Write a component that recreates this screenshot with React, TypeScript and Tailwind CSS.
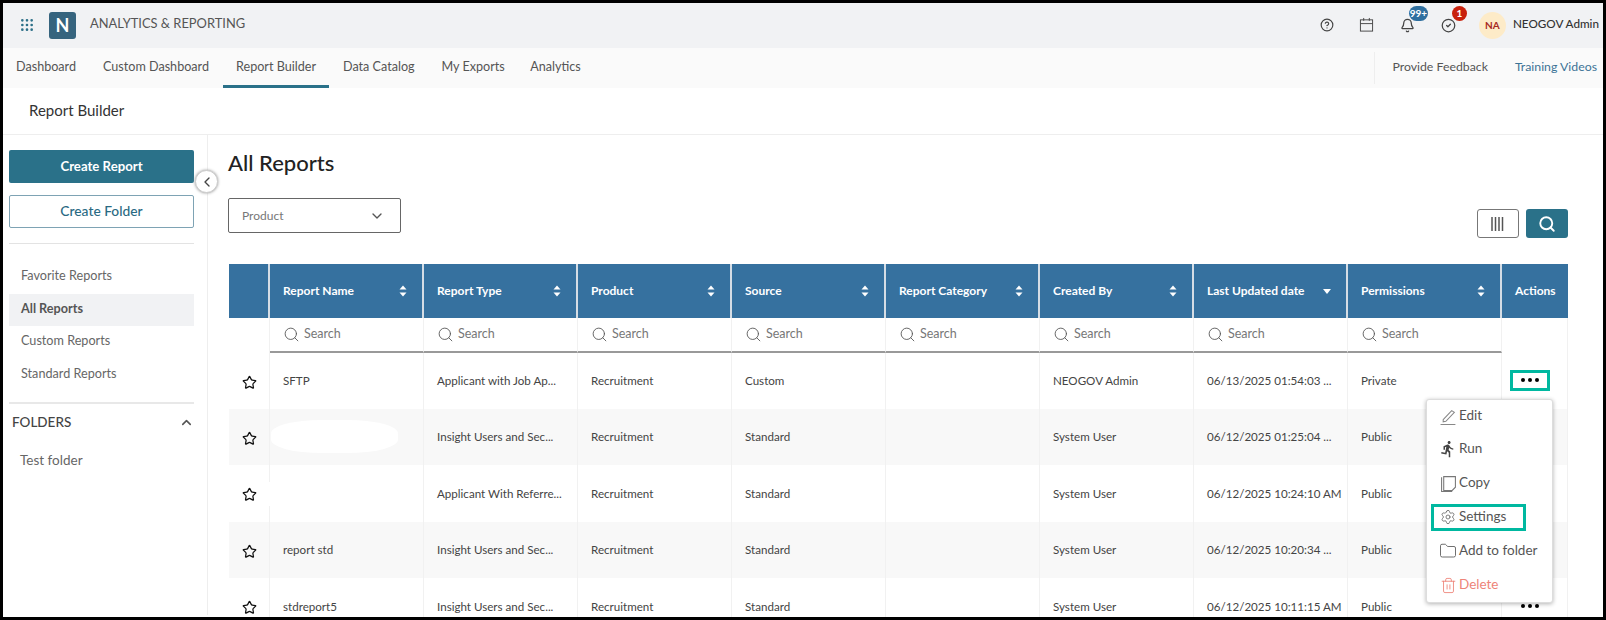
import { ChevronDown, ChevronLeft, ChevronUp, CircleHelp, Search, Star, Bell, CircleCheck, Trash2, Folder, Settings, Grip } from "lucide-react";
import { MdDirectionsRun } from "react-icons/md";

const columns = ["Report Name", "Report Type", "Product", "Source", "Report Category", "Created By", "Last Updated date", "Permissions"];

const rows = [
  { name: "SFTP", type: "Applicant with Job Ap...", source: "Custom", by: "NEOGOV Admin", date: "06/13/2025 01:54:03 ...", perm: "Private" },
  { name: "", type: "Insight Users and Sec...", source: "Standard", by: "System User", date: "06/12/2025 01:25:04 ...", perm: "Public", blob: true },
  { name: "", type: "Applicant With Referre...", source: "Standard", by: "System User", date: "06/12/2025 10:24:10 AM", perm: "Public", patch: true },
  { name: "report std", type: "Insight Users and Sec...", source: "Standard", by: "System User", date: "06/12/2025 10:20:34 ...", perm: "Public" },
  { name: "stdreport5", type: "Insight Users and Sec...", source: "Standard", by: "System User", date: "06/12/2025 10:11:15 AM", perm: "Public" },
];

function SortIcon() {
  return (
    <svg width="8" height="12" viewBox="0 0 8 12" className="fill-white">
      <path d="M4 0.5 7.5 4.5H.5zM4 11.5.5 7.5h7z" />
    </svg>
  );
}

function Dots() {
  return (
    <span className="flex gap-[3px]">
      <i className="h-[4px] w-[4px] rounded-full bg-black" />
      <i className="h-[4px] w-[4px] rounded-full bg-black" />
      <i className="h-[4px] w-[4px] rounded-full bg-black" />
    </span>
  );
}

function MenuItem({ icon, label, danger, first }: { icon: React.ReactNode; label: string; danger?: boolean; first?: boolean }) {
  return (
    <div className={`flex items-center gap-[2px] pl-[12px] text-[13.5px] ${first ? "h-[32px]" : "h-[34px]"} ${danger ? "text-[#ee8478]" : "text-[#555]"}`}>
      <span className="flex w-[18px] justify-center">{icon}</span>
      <span className="pb-[2px]">{label}</span>
    </div>
  );
}

export default function App() {
  return (
    <div className="h-[620px] w-[1606px] overflow-hidden border-x-[3px] border-y-[3px] border-black bg-white font-['Lato',sans-serif] text-[13px] text-[#444]">
      <header className="flex h-[45px] items-center bg-[#f1f2f4] pb-[1px] pl-[16px] pr-[4px]">
        <Grip size={16} className="text-[#2d7088]" />
        <div className="ml-[14px] flex h-[27px] w-[27px] items-center justify-center rounded-[3px] bg-[#36647e] text-[18px] font-bold text-white">N</div>
        <span className="ml-[14px] pb-[2px] text-[12.9px] text-[#555]">ANALYTICS &amp; REPORTING</span>
        <div className="ml-auto flex items-center">
          <CircleHelp size={14} className="text-[#444]" />
          <svg width="15" height="16" viewBox="0 0 16 16" className="ml-[25px] fill-none stroke-[#444]">
            <rect x="1.5" y="2.5" width="13" height="12" />
            <path d="M1.5 6.5h13M5 .5v3M11 .5v3" />
          </svg>
          <div className="relative ml-[26px]">
            <Bell size={15} className="text-[#444]" />
            <span className="absolute -top-[12px] left-[9px] flex h-[15px] w-[19px] items-center justify-center rounded-full bg-[#2f6f9f] text-[10px] font-bold text-white">99+</span>
          </div>
          <div className="relative ml-[26px]">
            <CircleCheck size={15} className="text-[#444]" />
            <span className="absolute -top-[12px] left-[11px] flex h-[15px] w-[15px] items-center justify-center rounded-full bg-[#c8200c] text-[10px] font-bold text-white">1</span>
          </div>
          <div className="ml-[23px] flex h-[27px] w-[27px] items-center justify-center rounded-full bg-[#fdebc8] text-[10px] font-bold text-[#a6291d]">NA</div>
          <span className="ml-[7px] pb-[2px] text-[11.7px] font-medium text-[#333]">NEOGOV Admin</span>
        </div>
      </header>

      <nav className="flex h-[40px] items-stretch bg-[#fafafa] pr-[6px] text-[12.6px] text-[#555]">
        <a className="flex items-center pb-[2px] pl-[13px] pr-[13.5px]">Dashboard</a>
        <a className="flex items-center px-[13.5px] pb-[2px]">Custom Dashboard</a>
        <a className="flex items-center border-b-[3px] border-[#2a7189] px-[13.5px] pt-[1px]">Report Builder</a>
        <a className="flex items-center px-[13.5px] pb-[2px]">Data Catalog</a>
        <a className="flex items-center pb-[2px] pl-[13.5px] pr-[12px]">My Exports</a>
        <a className="flex items-center px-[13.5px] pb-[2px]">Analytics</a>
        <div className="my-[4px] ml-auto flex items-center border-l border-[#eee] pb-[2px] pl-[17px] text-[12.3px]">Provide Feedback</div>
        <a className="ml-[27px] flex items-center pb-[2px] text-[12.3px] text-[#3c7396]">Training Videos</a>
      </nav>

      <div className="flex h-[47px] items-center border-b border-[#eee] pb-[2px] pl-[26px] text-[15px] text-[#333]">Report Builder</div>

      <div className="flex">
        <aside className="relative h-[480px] w-[205px] shrink-0 border-r border-[#eee] pl-[6px] pr-[13px] pt-[15px]">
          <button className="h-[33px] w-full rounded-[2px] bg-[#2a7189] text-[13.2px] font-bold text-white">Create Report</button>
          <button className="mt-[12px] h-[33px] w-full rounded-[2px] border border-[#7ea3b4] text-[13.8px] font-medium text-[#2a6a83]">Create Folder</button>
          <div className="mt-[15px] border-t border-[#e3e3e3]" />
          <ul className="mt-[17px] text-[12.65px] text-[#666]">
            <li className="flex h-[33px] items-center pb-[3px] pl-[12px]">Favorite Reports</li>
            <li className="flex h-[32px] items-center bg-[#f1f2f4] pb-[2px] pl-[12px] font-bold text-[#555]">All Reports</li>
            <li className="flex h-[33px] items-center pb-[3px] pl-[12px]">Custom Reports</li>
            <li className="flex h-[33px] items-center pb-[3px] pl-[12px]">Standard Reports</li>
          </ul>
          <div className="mt-[10px] border-t-2 border-[#e8e8e8]" />
          <div className="mt-[8px] flex items-center justify-between pl-[3px] text-[13.5px] font-medium text-[#444]">
            FOLDERS
            <ChevronUp size={15} strokeWidth={2.5} className="text-[#555]" />
          </div>
          <div className="mt-[18px] pl-[11px] text-[13.5px] text-[#666]">Test folder</div>
          <button className="absolute -right-[11px] top-[35px] flex h-[23px] w-[23px] items-center justify-center rounded-full border border-[#ccc] bg-white shadow-[0_0_3px_#999]">
            <ChevronLeft size={16} className="text-[#444]" />
          </button>
        </aside>

        <main className="relative w-[1360px] pl-[21px]">
          <h1 className="-ml-[1px] mt-[15px] text-[22px] font-medium leading-[26px] text-[#222]">All Reports</h1>
          <div className="-ml-[1px] mt-[22px] flex h-[35px] w-[173px] items-center justify-between rounded-[2px] border border-[#666] pl-[13px] pr-[15px] text-[12px] text-[#777]">
            Product
            <ChevronDown size={16} className="text-[#555]" />
          </div>
          <div className="-mt-[24px] flex justify-end gap-[7px]">
            <button className="flex h-[29px] w-[42px] items-center justify-center rounded-[3px] border border-[#777]">
              <svg width="14" height="14" viewBox="0 0 14 14" strokeWidth={1.5} className="stroke-[#555]"><path d="M1 0v14M4.5 0v14M8 0v14M11.5 0v14" /></svg>
            </button>
            <button className="flex h-[29px] w-[42px] items-center justify-center rounded-[3px] bg-[#2a7189]">
              <Search size={18} strokeWidth={2.5} className="text-white" />
            </button>
          </div>

          <div className="mt-[26px] w-[1339px]">
            <div className="flex h-[54px] bg-[#36719f] text-[12px] font-bold text-white">
              <div className="w-[41px] border-r-2 border-[#d5dde5]" />
              {columns.map((c) => (
                <div key={c} className="flex w-[154px] items-center justify-between border-r-2 border-[#d5dde5] pl-[13px] pr-[15px]">
                  {c}
                  {c === "Last Updated date" ? (
                    <svg width="8" height="5" viewBox="0 0 8 5" className="fill-white"><path d="M0 0h8L4 5z" /></svg>
                  ) : (
                    <SortIcon />
                  )}
                </div>
              ))}
              <div className="flex flex-1 items-center pl-[13px]">Actions</div>
            </div>

            <div className="flex h-[35px]">
              <div className="w-[41px] border-r border-[#f1f1f1]" />
              {columns.map((c) => (
                <div key={c} className="flex w-[154px] items-center gap-[4px] border-b-2 border-r border-b-[#999] border-r-[#f1f1f1] pl-[13px] text-[12.5px] text-[#777]">
                  <Search size={17} strokeWidth={1.25} className="text-[#555]" />
                  Search
                </div>
              ))}
              <div className="flex-1 border-r border-[#f1f1f1]" />
            </div>

            {rows.map((r, i) => (
              <div key={i} className={`flex whitespace-nowrap text-[11.6px] text-[#444] ${i === 0 ? "h-[55.5px]" : "h-[56.5px]"} ${i % 2 === 1 ? "bg-[#f8f8f8]" : ""}`}>
                <div className="relative flex w-[41px] items-center justify-center border-r border-[#f1f1f1] pt-[3px]">
                  <Star size={15} strokeWidth={2} className="text-[#111]" />
                  {r.patch && <div className="absolute -right-[1px] top-[17px] h-[24px] w-[3px] bg-white" />}
                </div>
                <div className="flex w-[154px] items-center border-r border-[#f1f1f1] pl-[13px]">
                  {r.blob ? <div className="-ml-[12px] h-[33px] w-[127px] rounded-[40%] bg-white" /> : r.name}
                </div>
                <div className="flex w-[154px] items-center border-r border-[#f1f1f1] pl-[13px]">{r.type}</div>
                <div className="flex w-[154px] items-center border-r border-[#f1f1f1] pl-[13px]">Recruitment</div>
                <div className="flex w-[154px] items-center border-r border-[#f1f1f1] pl-[13px]">{r.source}</div>
                <div className="w-[154px] border-r border-[#f1f1f1]" />
                <div className="flex w-[154px] items-center border-r border-[#f1f1f1] pl-[13px]">{r.by}</div>
                <div className="flex w-[154px] items-center border-r border-[#f1f1f1] pl-[13px]">{r.date}</div>
                <div className="flex w-[154px] items-center border-r border-[#f1f1f1] pl-[13px]">{r.perm}</div>
                <div className="flex flex-1 items-center justify-center border-r border-[#f1f1f1] pb-[1px] pr-[10px]">
                  {i === 0 ? (
                    <div className="flex h-[21px] w-[40px] items-center justify-center border-[3px] border-[#00b8a0] bg-white"><Dots /></div>
                  ) : i === 4 ? (
                    <Dots />
                  ) : null}
                </div>
              </div>
            ))}
          </div>

          <div className="absolute left-[1218px] top-[264px] z-10 h-[204px] w-[127px] rounded-[3px] border border-[#ddd] bg-white shadow-[0_1px_4px_rgba(0,0,0,0.3)]">
            <MenuItem first label="Edit" icon={
              <svg width="17" height="17" viewBox="0 0 16 16" className="fill-none stroke-[#888]"><path d="M3 11 11 2.5l2.5 1.5L5.5 12.5 3 13zM.5 15.5h14" /></svg>
            } />
            <MenuItem label="Run" icon={<MdDirectionsRun size={18} className="text-[#444]" />} />
            <MenuItem label="Copy" icon={
              <svg width="15" height="17" viewBox="0 0 14 16" className="fill-none stroke-[#777]"><path d="M2.5 1.5h11v10l-3 3h-8zM.5 2v13.5h10" /></svg>
            } />
            <div className="relative">
              <MenuItem label="Settings" icon={<Settings size={16} strokeWidth={1.25} className="text-[#666]" />} />
              <div className="absolute left-[4px] top-[4px] h-[27px] w-[95px] border-[3px] border-[#00b8a0]" />
            </div>
            <MenuItem label="Add to folder" icon={<Folder size={18} strokeWidth={1.25} className="text-[#666]" />} />
            <MenuItem danger label="Delete" icon={<Trash2 size={17} strokeWidth={1.25} className="text-[#ee8478]" />} />
          </div>
        </main>
      </div>
    </div>
  );
}
